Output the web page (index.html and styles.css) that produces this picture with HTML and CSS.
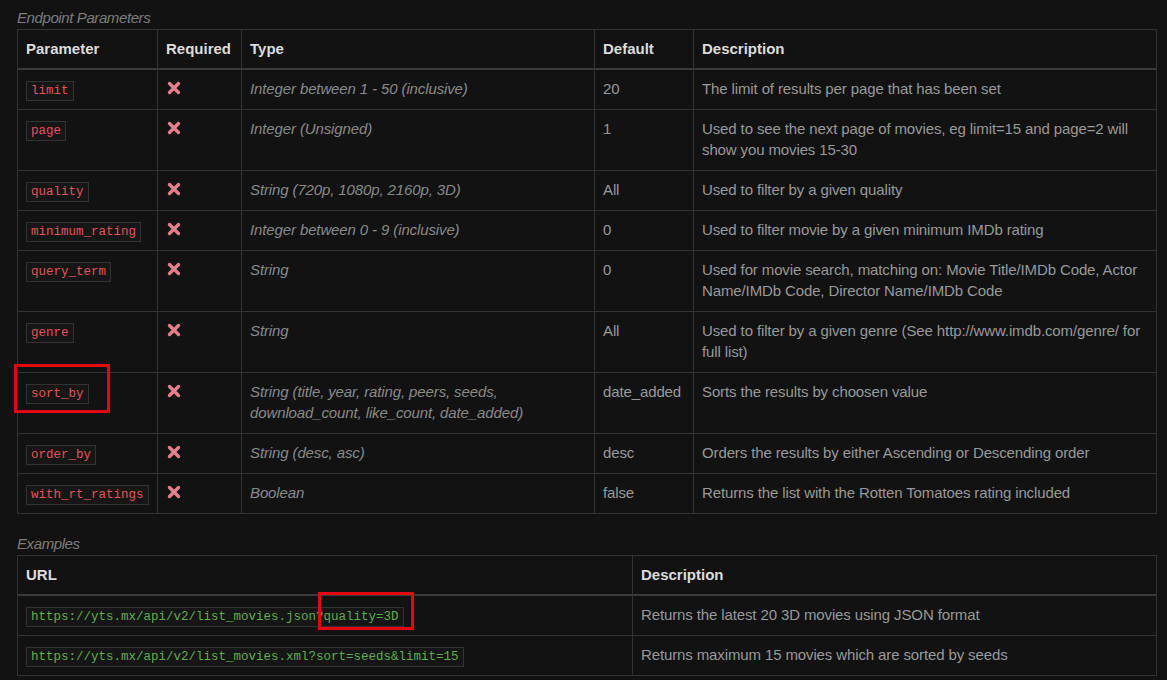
FILE: index.html
```html
<!DOCTYPE html>
<html>
<head>
<meta charset="utf-8">
<link rel="stylesheet" href="styles.css">
</head>
<body>
<div class="page">
  <table class="tbl params">
    <caption>Endpoint Parameters</caption>
    <colgroup>
      <col class="c-param"><col class="c-req"><col class="c-type"><col class="c-def"><col class="c-desc">
    </colgroup>
    <thead>
      <tr><th>Parameter</th><th>Required</th><th>Type</th><th>Default</th><th>Description</th></tr>
    </thead>
    <tbody>
      <tr><td><code class="red">limit</code></td><td><svg class="x" viewBox="0 0 14 14"><path d="M2.5 2.5L11.5 11.5M11.5 2.5L2.5 11.5"/></svg></td><td class="type">Integer between 1 - 50 (inclusive)</td><td>20</td><td>The limit of results per page that has been set</td></tr>
      <tr><td><code class="red">page</code></td><td><svg class="x" viewBox="0 0 14 14"><path d="M2.5 2.5L11.5 11.5M11.5 2.5L2.5 11.5"/></svg></td><td class="type">Integer (Unsigned)</td><td>1</td><td>Used to see the next page of movies, eg limit=15 and page=2 will show you movies 15-30</td></tr>
      <tr><td><code class="red">quality</code></td><td><svg class="x" viewBox="0 0 14 14"><path d="M2.5 2.5L11.5 11.5M11.5 2.5L2.5 11.5"/></svg></td><td class="type">String (720p, 1080p, 2160p, 3D)</td><td>All</td><td>Used to filter by a given quality</td></tr>
      <tr><td><code class="red">minimum_rating</code></td><td><svg class="x" viewBox="0 0 14 14"><path d="M2.5 2.5L11.5 11.5M11.5 2.5L2.5 11.5"/></svg></td><td class="type">Integer between 0 - 9 (inclusive)</td><td>0</td><td>Used to filter movie by a given minimum IMDb rating</td></tr>
      <tr><td><code class="red">query_term</code></td><td><svg class="x" viewBox="0 0 14 14"><path d="M2.5 2.5L11.5 11.5M11.5 2.5L2.5 11.5"/></svg></td><td class="type">String</td><td>0</td><td>Used for movie search, matching on: Movie Title/IMDb Code, Actor Name/IMDb Code, Director Name/IMDb Code</td></tr>
      <tr><td><code class="red">genre</code></td><td><svg class="x" viewBox="0 0 14 14"><path d="M2.5 2.5L11.5 11.5M11.5 2.5L2.5 11.5"/></svg></td><td class="type">String</td><td>All</td><td>Used to filter by a given genre (See http://www.imdb.com/genre/ for full list)</td></tr>
      <tr><td><span class="mark mark-sort"><code class="red">sort_by</code></span></td><td><svg class="x" viewBox="0 0 14 14"><path d="M2.5 2.5L11.5 11.5M11.5 2.5L2.5 11.5"/></svg></td><td class="type">String (title, year, rating, peers, seeds, download_count, like_count, date_added)</td><td>date_added</td><td>Sorts the results by choosen value</td></tr>
      <tr><td><code class="red">order_by</code></td><td><svg class="x" viewBox="0 0 14 14"><path d="M2.5 2.5L11.5 11.5M11.5 2.5L2.5 11.5"/></svg></td><td class="type">String (desc, asc)</td><td>desc</td><td>Orders the results by either Ascending or Descending order</td></tr>
      <tr><td><code class="red">with_rt_ratings</code></td><td><svg class="x" viewBox="0 0 14 14"><path d="M2.5 2.5L11.5 11.5M11.5 2.5L2.5 11.5"/></svg></td><td class="type">Boolean</td><td>false</td><td>Returns the list with the Rotten Tomatoes rating included</td></tr>
    </tbody>
  </table>

  <table class="tbl examples">
    <caption>Examples</caption>
    <colgroup><col class="c-url"><col class="c-edesc"></colgroup>
    <thead><tr><th>URL</th><th>Description</th></tr></thead>
    <tbody>
      <tr><td><code class="green">https://yts.mx/api/v2/list_movies.json<span class="mark mark-q">?quality=3D</span></code></td><td>Returns the latest 20 3D movies using JSON format</td></tr>
      <tr><td><code class="green">https://yts.mx/api/v2/list_movies.xml?sort=seeds&amp;limit=15</code></td><td>Returns maximum 15 movies which are sorted by seeds</td></tr>
    </tbody>
  </table>
</div>
</body>
</html>
```

FILE: styles.css
```css
html, body {
  margin: 0;
  padding: 0;
  background: #121212;
}
body {
  font-family: "Liberation Sans", Arial, sans-serif;
  font-size: 15px;
  color: #999;
}
.page {
  padding: 7px 10px 0 17px;
}
.tbl {
  width: 100%;
  border-collapse: collapse;
  table-layout: fixed;
  margin-bottom: 19px;
}
.tbl caption {
  caption-side: top;
  text-align: left;
  font-style: italic;
  color: #7d7d7d;
  line-height: 22px;
  letter-spacing: -0.4px;
}
.tbl th, .tbl td {
  border: 1px solid #333;
  padding: 8px 8px 10px;
  line-height: 21px;
  text-align: left;
  vertical-align: top;
}
.tbl th {
  color: #dcdcdc;
  font-weight: bold;
  border-bottom: 2px solid #3a3a3a;
  padding: 8px 8px 9px;
}
.tbl td {
  letter-spacing: -0.12px;
}
.tbl td.type {
  font-style: italic;
  color: #8a8a8a;
}
.c-param { width: 140px; }
.c-req { width: 84px; }
.c-type { width: 353px; }
.c-def { width: 99px; }
.c-url { width: 615px; }

code {
  font-family: "Liberation Mono", "DejaVu Sans Mono", monospace;
  font-size: 12.5px;
  letter-spacing: 0;
  padding: 2px 4px;
  border: 1px solid #333;
  background: #161616;
  line-height: 16px;
}
code.red { color: #e0555a; }
code.green { color: #5fae4e; }

.x {
  width: 14px;
  height: 14px;
  vertical-align: -1px;
  margin-left: 1px;
}
.x path {
  stroke: #e2818c;
  stroke-width: 3.4;
  stroke-linecap: round;
  fill: none;
}

.mark {
  position: relative;
}
.mark::after {
  content: "";
  position: absolute;
  border: 3px solid #e3080f;
  pointer-events: none;
}
.mark-sort::after {
  left: -12px;
  top: -19px;
  width: 90px;
  height: 43px;
}
.mark-q::after {
  left: 2px;
  top: -18px;
  width: 90px;
  height: 32px;
}
```
